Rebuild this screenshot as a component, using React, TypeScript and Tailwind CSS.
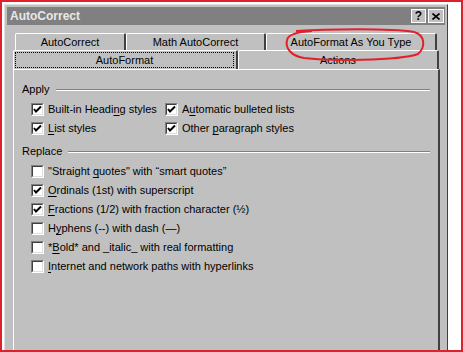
import React from 'react'

type Option = {
  label: React.ReactNode
  checked: boolean
}

const applyLeft: Option[] = [
  { label: <>Built-in Headi<u>n</u>g styles</>, checked: true },
  { label: <><u>L</u>ist styles</>, checked: true },
]

const applyRight: Option[] = [
  { label: <>A<u>u</u>tomatic bulleted lists</>, checked: true },
  { label: <>Other <u>p</u>aragraph styles</>, checked: true },
]

const replaceOptions: Option[] = [
  { label: <>"Straight <u>q</u>uotes" with “smart quotes”</>, checked: false },
  { label: <><u>O</u>rdinals (1st) with superscript</>, checked: true },
  { label: <><u>F</u>ractions (1/2) with fraction character (½)</>, checked: true },
  { label: <>H<u>y</u>phens (--) with dash (—)</>, checked: false },
  { label: <>*<u>B</u>old* and _italic_ with real formatting</>, checked: false },
  { label: <><u>I</u>nternet and network paths with hyperlinks</>, checked: false },
]

const Checkbox = ({ checked }: { checked: boolean }) => (
  <span className="w-[13px] h-[13px] shrink-0 border-t border-l border-[#808080] border-b border-r border-b-white border-r-white">
    <span className="block w-[11px] h-[11px] bg-white border-t border-l border-[#404040] border-b border-r border-b-[#dfdfdf] border-r-[#dfdfdf]">
      {checked && (
        <svg width="9" height="9" viewBox="0 0 9 9" className="block">
          <path d="M1 4 L3 6.5 L8 1.5" stroke="#000" strokeWidth="2" fill="none" />
        </svg>
      )}
    </span>
  </span>
)

const CheckRow = ({ option }: { option: Option }) => (
  <div className="flex items-center h-[19px]">
    <Checkbox checked={option.checked} />
    <span className="ml-[4px] whitespace-nowrap [&_u]:underline-offset-[2px]">{option.label}</span>
  </div>
)

const GroupHeading = ({ title }: { title: string }) => (
  <div className="flex items-center h-[19px] pr-[8px]">
    <span>{title}</span>
    <span className="flex-1 ml-[6px] border-t border-[#808080] border-b border-b-white" />
  </div>
)

const Tab = ({ label, width, height }: { label: string; width: string; height: string }) => (
  <div
    className={`${width} ${height} flex items-center justify-center border-t border-l border-white border-r-2 border-r-[#404040] rounded-t-[2px]`}
  >
    {label}
  </div>
)

export default function App() {
  return (
    <div
      className="relative w-[463px] h-[352px] overflow-hidden bg-white border-2 border-[#e0202a] text-[11px] text-black"
      style={{ fontFamily: '"Liberation Sans", Arial, sans-serif' }}
    >
      <div className="ml-[2px] mt-[2px] w-[444px] h-[360px] bg-[#c0c0c0] border-t border-l border-[#dfdfdf] border-r border-r-[#404040] p-[2px]">
        {/* title bar */}
        <div className="h-[18px] bg-[#808080] flex items-center justify-between pl-[3px] pr-[1px]">
          <span className="font-bold text-[12px] text-[#e8e8e8]">AutoCorrect</span>
          <div className="flex gap-[2px]">
            <span className="w-[15px] h-[14px] bg-[#c0c0c0] border-t border-l border-white border-r border-b border-[#404040] flex items-center justify-center font-bold text-[12px] leading-none">
              ?
            </span>
            <span className="w-[16px] h-[14px] bg-[#c0c0c0] border-t border-l border-white border-r border-b border-[#404040] flex items-center justify-center">
              <svg width="8" height="7" viewBox="0 0 8 7">
                <path d="M0.5 0.5 L7.5 6.5 M7.5 0.5 L0.5 6.5" stroke="#000" strokeWidth="1.6" />
              </svg>
            </span>
          </div>
        </div>

        {/* tabs */}
        <div className="mt-[8px] ml-[6px]">
          <div className="flex pl-[2px]">
            <Tab label="AutoCorrect" width="w-[111px]" height="h-[17px]" />
            <Tab label="Math AutoCorrect" width="w-[140px]" height="h-[17px]" />
            <Tab label="AutoFormat As You Type" width="w-[171px]" height="h-[17px]" />
          </div>
          <div className="flex">
            <div className="w-[225px] h-[19px] border-t border-l border-white border-r-2 border-r-[#404040] rounded-t-[2px] p-[1px] pr-[2px]">
              <div className="h-full flex items-center justify-center border border-dotted border-black">
                AutoFormat
              </div>
            </div>
            <Tab label="Actions" width="w-[201px]" height="h-[19px]" />
          </div>

          {/* panel */}
          <div className="w-[427px] h-[300px] border-l border-t border-white border-r-2 border-r-[#404040] pl-[8px] pt-[10px]">
            <GroupHeading title="Apply" />
            <div className="flex pl-[9px] mt-[1px]">
              <div className="w-[134px]">
                {applyLeft.map((o, i) => (
                  <CheckRow key={i} option={o} />
                ))}
              </div>
              <div>
                {applyRight.map((o, i) => (
                  <CheckRow key={i} option={o} />
                ))}
              </div>
            </div>
            <div className="mt-[4px]">
              <GroupHeading title="Replace" />
            </div>
            <div className="pl-[9px] mt-[1px]">
              {replaceOptions.map((o, i) => (
                <CheckRow key={i} option={o} />
              ))}
            </div>
          </div>
        </div>
      </div>

      {/* hand-drawn annotation */}
      <svg className="absolute left-[280px] top-[25px]" width="148" height="36" viewBox="0 0 148 36">
        <path
          d="M14 4 C 45 2, 108 1, 132 5 C 143 8, 144 20, 136 27 C 116 34, 45 34, 22 31 C 9 29, 3 21, 5 13 C 6 8, 13 5, 30 4"
          stroke="#e0202a"
          strokeWidth="2"
          fill="none"
        />
      </svg>
    </div>
  )
}
